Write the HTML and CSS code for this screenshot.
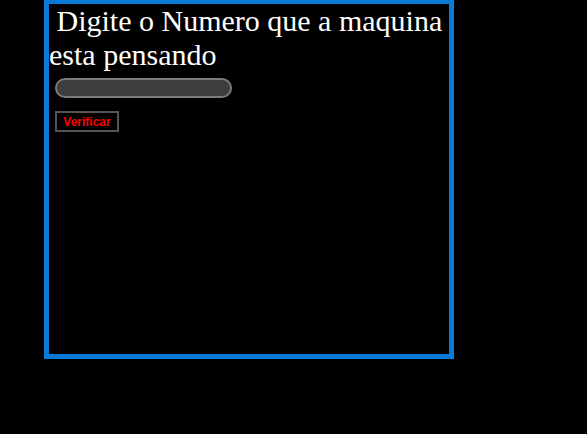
FILE: index.html
```html
<!DOCTYPE html>
<html lang="pt">
<head>
<meta charset="utf-8">
<title>Adivinhe o Número</title>
<link rel="stylesheet" href="styles.css">
</head>
<body>
<div class="box">
  <p class="title">&nbsp;Digite o Numero que a maquina esta pensando</p>
  <div class="field"><input class="num" type="text"></div>
  <div class="actions"><button class="btn" type="button">Verificar</button></div>
</div>
</body>
</html>
```
FILE: styles.css
```css
html, body {
  margin: 0;
  padding: 0;
  background: #000;
}
.box {
  box-sizing: content-box;
  width: 400px;
  height: 350px;
  margin: -1px 0 0 44px;
  border: 5px solid #0a7ad8;
  background: #000;
}
.title {
  margin: 0;
  font-family: "Liberation Serif", "Times New Roman", serif;
  font-size: 30px;
  line-height: normal;
  color: #fff;
}
.field {
  padding: 6px 0 0 6px;
}
.num {
  display: block;
  box-sizing: border-box;
  width: 177px;
  height: 20px;
  margin: 0;
  border: 2px solid #7b7b7b;
  border-radius: 10px;
  background: #3d3d3d;
  color: #fff;
  outline: none;
}
.actions {
  padding: 13px 0 0 6px;
}
.btn {
  display: block;
  box-sizing: border-box;
  width: 64px;
  height: 21px;
  margin: 0;
  padding: 0;
  border: 2px solid #555;
  background: #000;
  color: #f00;
  font-family: "Liberation Sans", Arial, sans-serif;
  font-size: 12px;
  font-weight: bold;
}
```
